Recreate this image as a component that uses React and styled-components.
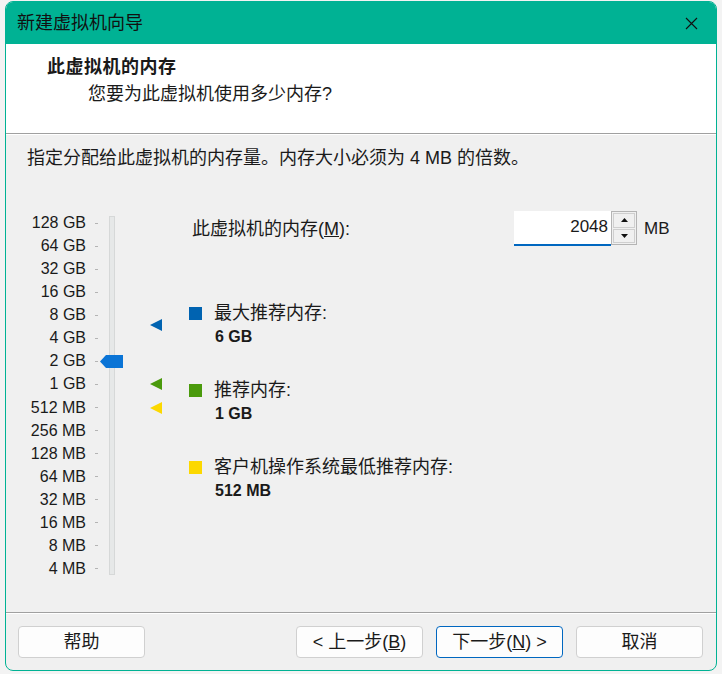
import React from 'react';
import styled, { createGlobalStyle } from 'styled-components';

const teal = '#00b294';
const uiFont = `"Liberation Sans", "Noto Sans CJK SC", sans-serif`;

const GlobalStyle = createGlobalStyle`
  html, body {
    margin: 0;
    padding: 0;
    background: #f3f3f3;
  }
  body {
    font-family: ${uiFont};
    color: #1a1a1a;
  }
`;

const Page = styled.div`
  padding: 1px 0 0 5px;
`;

const Window = styled.div`
  width: 712px;
  height: 670px;
  box-sizing: border-box;
  border: 1px solid ${teal};
  border-radius: 8px;
  overflow: hidden;
  display: flex;
  flex-direction: column;
  background: #f0f0f0;
`;

const TitleBar = styled.div`
  height: 42px;
  flex: none;
  background: ${teal};
  display: flex;
  align-items: center;
  justify-content: space-between;
  padding: 0 18px 0 11px;
  font-size: 18px;
  line-height: 24px;
  color: #111;
`;

const CloseButton = styled.span`
  display: flex;
  width: 13px;
  height: 13px;
`;

const Header = styled.div`
  height: 89px;
  flex: none;
  box-sizing: border-box;
  background: #fff;
  padding: 11px 0 0 41px;
`;

const HeaderTitle = styled.div`
  font-size: 18px;
  line-height: 24px;
  font-weight: 700;
  letter-spacing: 0.5px;
`;

const HeaderSub = styled.div`
  margin: 3px 0 0 41px;
  font-size: 18px;
  line-height: 24px;
`;

const Divider = styled.div`
  flex: none;
  height: 1px;
  background: #a0a0a0;
  border-bottom: 1px solid #fff;
`;

const Body = styled.div`
  flex: 1;
  padding: 11px 0 0 21px;
`;

const Instruction = styled.div`
  font-size: 18px;
  line-height: 24px;
`;

const Content = styled.div`
  display: flex;
  align-items: flex-start;
  margin-top: 41px;
`;

const SliderArea = styled.div`
  position: relative;
  display: flex;
  align-items: flex-start;
  width: 162px;
  margin-top: 2px;
  flex: none;
`;

const Labels = styled.div`
  width: 71px;
  height: 366px;
  display: flex;
  flex-direction: column;
  justify-content: space-between;
`;

const LabelRow = styled.div`
  height: 20px;
  display: flex;
  align-items: center;
  justify-content: flex-end;
  font-size: 16px;
  white-space: nowrap;

  &::after {
    content: '';
    width: 3px;
    height: 1px;
    margin-left: 9px;
    background: #b4b4b4;
  }
`;

const Track = styled.div`
  width: 6px;
  height: 359px;
  box-sizing: border-box;
  margin: 3px 0 0 11px;
  border: 1px solid #d6d8d8;
  background: #e6e8e8;
`;

const Thumb = styled.svg`
  position: absolute;
  left: 73px;
`;

const Marker = styled.svg`
  position: absolute;
  left: 123px;
`;

const Panel = styled.div`
  flex: 1;
`;

const MemoryRow = styled.div`
  display: flex;
  align-items: center;
  height: 35px;
`;

const MemoryLabel = styled.div`
  width: 322px;
  padding-left: 3px;
  font-size: 18px;
  line-height: 24px;
`;

const NumberInput = styled.div`
  width: 97px;
  height: 35px;
  box-sizing: border-box;
  background: #fff;
  border-bottom: 2px solid #0067c0;
  text-align: right;
  padding: 4px 3px 0 0;
  font-size: 17px;
  line-height: 24px;
`;

const Spinner = styled.div`
  width: 26px;
  height: 34px;
  box-sizing: border-box;
  border: 1px solid #b4b4b4;
  display: flex;
  flex-direction: column;
  padding: 1px;
  gap: 1px;
  align-self: flex-start;
`;

const SpinButton = styled.div`
  flex: 1;
  border: 1px solid #cfcfcf;
  background: #f0f0f0;
  display: flex;
  align-items: center;
  justify-content: center;
`;

const Unit = styled.div`
  margin-left: 7px;
  font-size: 17px;
`;

const Legend = styled.div`
  display: flex;
  flex-direction: column;
  gap: 29px;
  margin-top: 55px;
`;

const LegendItem = styled.div`
  display: grid;
  grid-template-columns: 13px auto;
  column-gap: 12px;
  align-items: center;
`;

const Swatch = styled.div`
  width: 13px;
  height: 13px;
  background: ${(p) => p.color};
`;

const LegendLabel = styled.div`
  font-size: 18px;
  line-height: 24px;
`;

const LegendValue = styled.div`
  grid-column: 2;
  font-size: 16px;
  font-weight: 700;
  line-height: 24px;
  padding-left: 1px;
`;

const Footer = styled.div`
  height: 56px;
  flex: none;
  box-sizing: border-box;
  padding: 12px 13px 0 12px;
  display: flex;
  align-items: flex-start;
`;

const ButtonGroup = styled.div`
  display: flex;
  gap: 13px;
  margin-left: auto;
`;

const Button = styled.div`
  width: 127px;
  height: 32px;
  box-sizing: border-box;
  border: 1px solid ${(p) => (p.primary ? '#0067c0' : '#d0d0d0')};
  border-radius: 4px;
  background: #fdfdfd;
  display: flex;
  align-items: center;
  justify-content: center;
  font-size: 18px;
  line-height: 24px;
  color: #1a1a1a;
`;

const sizes = [
  '128 GB', '64 GB', '32 GB', '16 GB', '8 GB', '4 GB', '2 GB', '1 GB',
  '512 MB', '256 MB', '128 MB', '64 MB', '32 MB', '16 MB', '8 MB', '4 MB',
];

const ROW = 346 / 15;
const centerFor = (mb) => 10 + Math.log2(131072 / mb) * ROW;

const markers = [
  { mb: 6144, color: '#0063b1' },
  { mb: 1024, color: '#4a9a0c' },
  { mb: 512, color: '#fcd800' },
];

const legend = [
  { color: '#0063b1', label: '最大推荐内存:', value: '6 GB' },
  { color: '#4a9a0c', label: '推荐内存:', value: '1 GB' },
  { color: '#fcd800', label: '客户机操作系统最低推荐内存:', value: '512 MB' },
];

const memory = 2048;

export default function App() {
  return (
    <Page>
      <GlobalStyle />
      <Window>
        <TitleBar>
          <span>新建虚拟机向导</span>
          <CloseButton>
            <svg width="13" height="13" viewBox="0 0 13 13">
              <path d="M1 1 L12 12 M12 1 L1 12" stroke="#111" strokeWidth="1.1" fill="none" />
            </svg>
          </CloseButton>
        </TitleBar>
        <Header>
          <HeaderTitle>此虚拟机的内存</HeaderTitle>
          <HeaderSub>您要为此虚拟机使用多少内存?</HeaderSub>
        </Header>
        <Divider />
        <Body>
          <Instruction>指定分配给此虚拟机的内存量。内存大小必须为 4 MB 的倍数。</Instruction>
          <Content>
            <SliderArea>
              <Labels>
                {sizes.map((s) => (
                  <LabelRow key={s}>{s}</LabelRow>
                ))}
              </Labels>
              <Track />
              <Thumb
                width="23"
                height="13"
                viewBox="0 0 23 13"
                style={{ top: centerFor(memory) - 6.5 }}
              >
                <polygon points="0,6.5 6,0 23,0 23,13 6,13" fill="#0a74d6" />
              </Thumb>
              {markers.map((m) => (
                <Marker
                  key={m.mb}
                  width="12"
                  height="12"
                  viewBox="0 0 12 12"
                  style={{ top: centerFor(m.mb) - 6 }}
                >
                  <polygon points="0,6 12,0 12,12" fill={m.color} />
                </Marker>
              ))}
            </SliderArea>
            <Panel>
              <MemoryRow>
                <MemoryLabel>
                  此虚拟机的内存(<u>M</u>):
                </MemoryLabel>
                <NumberInput>{memory}</NumberInput>
                <Spinner>
                  <SpinButton>
                    <svg width="7" height="4" viewBox="0 0 7 4">
                      <polygon points="3.5,0 7,4 0,4" fill="#111" />
                    </svg>
                  </SpinButton>
                  <SpinButton>
                    <svg width="7" height="4" viewBox="0 0 7 4">
                      <polygon points="0,0 7,0 3.5,4" fill="#111" />
                    </svg>
                  </SpinButton>
                </Spinner>
                <Unit>MB</Unit>
              </MemoryRow>
              <Legend>
                {legend.map((l) => (
                  <LegendItem key={l.value}>
                    <Swatch color={l.color} />
                    <LegendLabel>{l.label}</LegendLabel>
                    <LegendValue>{l.value}</LegendValue>
                  </LegendItem>
                ))}
              </Legend>
            </Panel>
          </Content>
        </Body>
        <Divider />
        <Footer>
          <Button>帮助</Button>
          <ButtonGroup>
            <Button>
              &lt; 上一步(<u>B</u>)
            </Button>
            <Button primary>
              下一步(<u>N</u>) &gt;
            </Button>
            <Button>取消</Button>
          </ButtonGroup>
        </Footer>
      </Window>
    </Page>
  );
}
